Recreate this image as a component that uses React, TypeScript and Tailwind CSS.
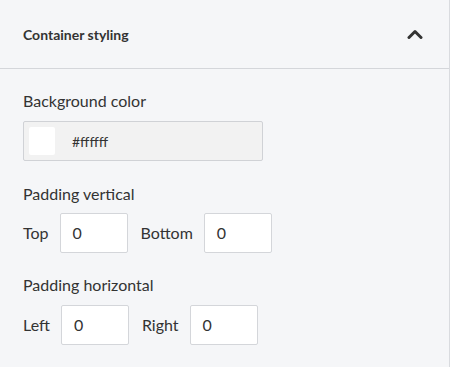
const NumberField = ({ label, value }: { label: string; value: string }) => (
  <div className="flex items-center">
    <span className="text-[16px] text-[#333] mr-[11px]">{label}</span>
    <div className="w-[68px] h-[40px] bg-white border border-[#d4d6da] rounded-[2px] flex items-center px-3 text-[16px] text-[#333]">
      {value}
    </div>
  </div>
);

export default function App() {
  return (
    <div className="w-[451px] h-[367px] bg-white" style={{ fontFamily: "Lato, 'Open Sans', sans-serif" }}>
      <div className="w-[450px] h-full bg-[#f5f6f8] border-r border-[#d9dbdf]">
        <div className="h-[69px] flex items-center justify-between pl-[23px] pr-[26px] border-b border-[#d4d6da]">
          <span className="text-[14px] font-bold text-[#333]">Container styling</span>
          <svg width="16" height="10" viewBox="0 0 16 10" className="text-[#333]">
            <path d="M2 8.5 L8 2.5 L14 8.5" stroke="currentColor" strokeWidth="3" fill="none" strokeLinecap="round" strokeLinejoin="round" />
          </svg>
        </div>
        <div className="px-[23px] pt-[22px]">
          <div className="text-[16px] text-[#333] leading-5">Background color</div>
          <div className="mt-[10px] w-[240px] h-[40px] bg-[#f2f2f2] border border-[#d0d2d6] rounded-[2px] flex items-center pl-[5px]">
            <div className="w-[26px] h-[28px] bg-white rounded-[2px]" />
            <span className="ml-[17px] text-[14px] text-[#333]">#ffffff</span>
          </div>
          <div className="mt-[23px] text-[16px] text-[#333] leading-5">Padding vertical</div>
          <div className="mt-[9px] flex items-center gap-[13px]">
            <NumberField label="Top" value="0" />
            <NumberField label="Bottom" value="0" />
          </div>
          <div className="mt-[22px] text-[16px] text-[#333] leading-5">Padding horizontal</div>
          <div className="mt-[10px] flex items-center gap-[13px]">
            <NumberField label="Left" value="0" />
            <NumberField label="Right" value="0" />
          </div>
        </div>
      </div>
    </div>
  );
}
